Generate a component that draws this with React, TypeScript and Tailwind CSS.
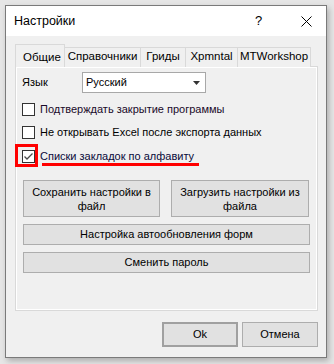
import { useState } from 'react'

const tabs = [
  { label: 'Справочники', w: 'w-[77px]' },
  { label: 'Гриды', w: 'w-[46px]' },
  { label: 'Xpmntal', w: 'w-[53px]' },
  { label: 'MTWorkshop', w: 'w-[74px]' },
]

function CheckBox({ checked }: { checked?: boolean }) {
  return (
    <div className="w-[13px] h-[13px] border border-[#333333] bg-white flex items-center justify-center shrink-0">
      {checked && (
        <svg width="11" height="11" viewBox="0 0 11 11">
          <path d="M1.5 5.5 L4 8 L9.5 2.5" fill="none" stroke="#4a4a4a" strokeWidth="1.3" />
        </svg>
      )}
    </div>
  )
}

export default function App() {
  const [sorted, setSorted] = useState(true)

  return (
    <div
      className="w-[334px] h-[364px] bg-[#e6e6e6] pl-[5px] pt-[5px] text-[11px] text-black"
      style={{ fontFamily: '"Liberation Sans", Arial, sans-serif' }}
    >
      <div className="w-[322px] h-[353px] border border-[#7a7a7a] bg-[#f0f0f0] flex flex-col shadow-[2px_3px_6px_rgba(0,0,0,0.25)]">
        {/* Title bar */}
        <div className="h-[30px] bg-white flex items-center pl-[8px] shrink-0">
          <span className="text-[12.5px] flex-1">Настройки</span>
          <span className="text-[13px] w-[10px] mr-[36px]">?</span>
          <svg width="11" height="11" viewBox="0 0 11 11" className="mr-[14px]">
            <path d="M0.5 0.5 L10.5 10.5 M10.5 0.5 L0.5 10.5" stroke="#000" strokeWidth="1" />
          </svg>
        </div>

        {/* Tabs */}
        <div className="pt-[8px] pl-[9px] pr-[8px]">
          <div className="flex items-end h-[23px] relative z-10">
            <div className="w-[50px] h-[23px] bg-[#f0f0f0] border border-b-0 border-[#d9d9d9] pl-[7px] pt-[4px] text-[11.5px]">
              Общие
            </div>
            {tabs.map((t) => (
              <div
                key={t.label}
                className={`${t.w} h-[20px] -ml-px bg-[#f0f0f0] border border-b-0 border-[#d9d9d9] flex items-center justify-center pb-[1px] text-[11.5px]`}
              >
                {t.label}
              </div>
            ))}
          </div>

          {/* Panel */}
          <div className="h-[245px] -mt-px border border-[#d9d9d9] relative">
            <div className="h-full border border-white flex flex-col pl-[5px] pr-[7px]">
              <div className="flex items-center mt-[4px] h-[21px]">
                <span className="w-[60px]">Язык</span>
                <div className="w-[124px] h-[21px] bg-white border border-[#a8a8a8] flex items-center pl-[3px] pr-[5px]">
                  <span className="flex-1">Русский</span>
                  <svg width="7" height="4" viewBox="0 0 7 4">
                    <path d="M0 0 H7 L3.5 4 Z" fill="#333" />
                  </svg>
                </div>
              </div>

              <div className="flex items-center gap-[5px] mt-[10px] h-[13px]">
                <CheckBox />
                <span className="text-[#1a0a2a]">Подтверждать закрытие программы</span>
              </div>
              <div className="flex items-center gap-[5px] mt-[10px] h-[13px]">
                <CheckBox />
                <span>Не открывать Excel после экспорта данных</span>
              </div>
              <div
                className="flex items-center gap-[5px] mt-[11px] h-[13px] relative"
                onClick={() => setSorted(!sorted)}
              >
                <div className="absolute -left-[7px] -top-[6px] w-[23px] h-[23px] border-[3px] border-[#ff0000]" />
                <CheckBox checked={sorted} />
                <span className="text-[#0a0a3a]">Списки закладок по алфавиту</span>
                <div className="absolute left-[20px] top-[13px] w-[157px] h-[3px] bg-[#ff0000]" />
              </div>

              <div className="flex gap-[11px] mt-[17px] pl-px">
                <button className="w-[138px] h-[37px] bg-[#e1e1e1] border border-[#adadad] leading-[14px] px-[2px]">
                  Сохранить настройки в файл
                </button>
                <button className="w-[139px] h-[37px] bg-[#e1e1e1] border border-[#adadad] leading-[14px] px-[2px]">
                  Загрузить настройки из файла
                </button>
              </div>
              <button className="ml-px mt-[7px] w-[287px] h-[21px] bg-[#e1e1e1] border border-[#adadad]">
                Настройка автообновления форм
              </button>
              <button className="ml-px mt-[7px] w-[287px] h-[21px] bg-[#e1e1e1] border border-[#adadad]">
                Сменить пароль
              </button>
            </div>
          </div>
        </div>

        {/* Footer buttons */}
        <div className="flex justify-end gap-[4px] pr-[8px] mt-[11px]">
          <button className="w-[76px] h-[25px] bg-[#e1e1e1] border-2 border-[#a0a0a0]">Ok</button>
          <button className="w-[76px] h-[25px] bg-[#e1e1e1] border border-[#adadad]">Отмена</button>
        </div>
      </div>
    </div>
  )
}
